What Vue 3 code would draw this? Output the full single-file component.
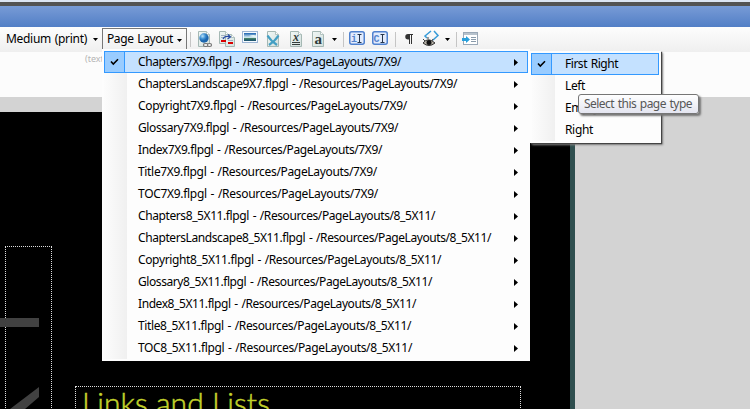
<script setup>
const files = [
  ['Chapters7X9', '7X9', 263], ['ChaptersLandscape9X7', '7X9', 319], ['Copyright7X9', '7X9', 269],
  ['Glossary7X9', '7X9', 260], ['Index7X9', '7X9', 244], ['Title7X9', '7X9', 239], ['TOC7X9', '7X9', 240],
  ['Chapters8_5X11', '8_5X11', 297], ['ChaptersLandscape8_5X11', '8_5X11', 353], ['Copyright8_5X11', '8_5X11', 303],
  ['Glossary8_5X11', '8_5X11', 294], ['Index8_5X11', '8_5X11', 278], ['Title8_5X11', '8_5X11', 273], ['TOC8_5X11', '8_5X11', 274]
].map(([name, folder, width]) => ({ text: `${name}.flpgl - /Resources/PageLayouts/${folder}/`, width }))

const pages = [['First Right', 53], ['Left', 20], ['Empty', 34], ['Right', 28]]

// Spreads the letters of a label over a given width.
const vFit = {
  mounted(el, { value }) {
    const natural = el.getBoundingClientRect().width
    el.style.letterSpacing = `${(value - natural) / el.textContent.length}px`
  }
}
</script>

<template>
  <div class="app">
    <div class="edge"></div>
    <div class="frame"></div>
    <div class="caption"></div>
    <div class="toolbar">
      <div class="medium"><span v-fit="81">Medium (print)</span></div>
      <i class="drop"></i>
      <div class="layout-button"><span v-fit="66">Page Layout</span><i class="drop"></i></div>
      <svg class="icons" width="300" height="25" viewBox="187 27 300 25">
        <defs>
          <linearGradient id="doc" x2="1" y2="1"><stop stop-color="#f1f7f5" /><stop offset="1" stop-color="#d3e0dd" /></linearGradient>
          <radialGradient id="globe" cx=".35" cy=".3"><stop stop-color="#b9e2f8" /><stop offset=".6" stop-color="#3c8fd2" /><stop offset="1" stop-color="#1c66ae" /></radialGradient>
          <linearGradient id="sky" x2="0" y2="1"><stop stop-color="#1b62b0" /><stop offset=".55" stop-color="#d8eef5" /><stop offset=".7" stop-color="#36765f" /><stop offset="1" stop-color="#1b5074" /></linearGradient>
        </defs>
        <path fill="#c5c5c5" d="M190 32h1v15h-1zM343 32h1v15h-1zM395 32h1v15h-1zM456 32h1v15h-1z" />
        <g fill="url(#doc)" stroke="#a5b8b4">
          <path d="M198.500 31.500h8l3 3v12h-11z" />
          <path d="M219.500 31.500h6l3 3v9h-9z" />
          <path d="M225.500 34.500h6l3 3v9h-9z" />
          <path d="M267.500 31.500h8l3 3v12h-11z" />
          <path d="M290.500 31.500h8l3 3v12h-11z" />
          <path d="M312.500 31.500h8l3 3v12h-11z" />
        </g>
        <g fill="#fff" stroke="#a5b8b4" stroke-width=".8"><path d="M206.500 31.500v3h3M225.500 31.500v3h3M231.500 34.500v3h3M275.500 31.500v3h3M298.500 31.500v3h3M320.500 31.500v3h3" /></g>
        <circle cx="204" cy="38" r="4.700" fill="url(#globe)" />
        <g fill="#eee" stroke="#777" stroke-width="1.200"><rect x="203.500" y="43.500" width="4.500" height="3" rx="1.500" /><rect x="207.500" y="43.500" width="4" height="3" rx="1.500" /></g>
        <path d="M221 35.500h4M221 37.500h3M228 40.500h5" stroke="#9fb0c0" />
        <path d="M221 40h5v2h-5zM228 42h5v2h-5z" fill="#d90000" />
        <path d="M223 39q2-4 7-2m-2-2.500 2.500 2.500-3 2" stroke="#264aa3" stroke-width="1.200" fill="none" />
        <rect x="242.500" y="31.500" width="15" height="11" fill="#f6faff" stroke="#9db5d4" />
        <rect x="244" y="33" width="12" height="8" fill="url(#sky)" />
        <path d="M249 36q4-1.500 7-.5v2q-4-1-7-1.500z" fill="#e6f5f5" />
        <path d="M267.500 35.500q3 5 9.500 9.500M278.500 35.500q-3 5-9.500 9.500" fill="none" stroke="#439fc4" stroke-width="2.200" />
        <path d="M292 42.500h8M292 44.500h8" stroke="#343d3b" />
        <text x="293" y="40.500" class="glyph italic">x</text>
        <text x="314.500" y="44" class="glyph letter">a</text>
        <path d="M332 38h5l-2.500 3zM445 38h5l-2.500 3z" fill="#000" />
        <g fill="#e2ebfc" stroke="#4f81cf" stroke-width="1.500"><rect x="349.750" y="31.750" width="14.500" height="12.500" rx="2" /><rect x="372.750" y="31.750" width="14.500" height="12.500" rx="2" /></g>
        <text x="351" y="42" class="code">i</text><text x="373.500" y="42" class="code">C</text>
        <path d="M357.500 34.500h4M359.500 35v7M357.500 42.500h4M380.500 34.500h4M382.500 35v7M380.500 42.500h4" stroke="#26364d" fill="none" />
        <path d="M413 34h-5a2.750 2.750 0 0 0 0 5.500h1v4.500h1v-9h1v9h1v-9h1z" fill="#333" />
        <path d="m431 31-6 5 2 2M434 31l4 4.500-5 4.500" fill="none" stroke="#379bd8" stroke-width="1.500" />
        <path d="M423 43q5-6.500 12 0-6 5-12 0" fill="#b5b0a6" stroke="#333" /><circle cx="429" cy="42.500" r="2.500" fill="#111" />
        <path d="M423 39l2 2M428 37v2M433 39l-1 2" stroke="#444" />
        <rect x="463.500" y="32.500" width="14" height="12" fill="#fff" stroke="#9aa8b7" /><path d="M464 33h13v2h-13z" fill="#b7c2cc" />
        <path d="M471 37.500h5M471 39.500h5M471 41.500h5" stroke="#899aaa" />
        <path d="M462 38h4v-2l4 3.500-4 3.500v-2h-4z" fill="#29a0dc" />
      </svg>
    </div>
    <div class="strip"></div>
    <div class="canvas"><div class="page"></div></div>

    <span class="hint">(text)</span>
    <div class="side-frame"></div>
    <svg class="side-letters" width="40" height="100" viewBox="0 0 40 100"><path d="M0 9h39v9H0zM39 78v10L25 100H10z" fill="#414141" /></svg>
    <div class="heading-frame"><span v-fit="188">Links and Lists</span></div>

    <div class="menu">
      <div class="gutter"></div>
      <div v-for="(file, i) in files" :key="file.text" class="item" :class="{ active: i === 0 }">
        <span class="check"><svg v-if="i === 0" width="9" height="8" viewBox="0 0 9 8"><path d="m1 3.500 2.300 2.500L8 1.300" /></svg></span>
        <span class="label"><span v-fit="file.width">{{ file.text }}</span></span>
        <svg class="arrow" width="4" height="7" viewBox="0 0 4 7"><path d="M0 0v7l4-3.500z" /></svg>
      </div>
    </div>

    <div class="menu submenu">
      <div class="gutter"></div>
      <div v-for="([name, width], i) in pages" :key="name" class="item" :class="{ active: i === 0 }">
        <span class="check"><svg v-if="i === 0" width="9" height="8" viewBox="0 0 9 8"><path d="m1 3.500 2.300 2.500L8 1.300" /></svg></span>
        <span class="label"><span v-fit="width">{{ name }}</span></span>
      </div>
    </div>
    <div class="tooltip"><span v-fit="108">Select this page type</span></div>
  </div>
</template>

<style>
body { margin: 0; overflow: hidden; }
</style>

<style scoped>
* { box-sizing: border-box; }
.app { position: relative; width: 750px; height: 409px; overflow: hidden; display: flex; flex-direction: column; font: 12px/16px "Noto Sans", sans-serif; word-spacing: 1px; color: #000; white-space: nowrap; }
.edge { height: 2px; background: #dce5f3; flex: none; }
.frame { height: 4px; background: #535353; flex: none; }
.caption { height: 21px; background: linear-gradient(#789bd6, #527fc6); flex: none; }
.toolbar { height: 25px; flex: none; display: flex; align-items: flex-start; background: linear-gradient(#fdfdfd, #efefef); }
.medium { width: 93px; padding: 4px 0 0 6px; flex: none; }
.drop { width: 5px; height: 3px; background: #000; clip-path: polygon(0 0, 100% 0, 50% 100%); margin-top: 11px; flex: none; }
.layout-button { width: 85px; height: 23px; margin: 1px 0 0 4px; padding: 2px 0 0 4px; border: 1px solid #777; border-bottom: 0; display: flex; gap: 4px; flex: none; }
.layout-button .drop { margin-top: 8px; }
.icons { flex: none; }
.glyph { font: bold 12px "Liberation Serif", serif; fill: #303b39; }
.italic { font-style: italic; }
.letter { font-size: 15px; }
.code { font: bold 10px "Liberation Mono", monospace; fill: #5686cf; }
.strip { height: 45px; background: #fcfcfc; flex: none; }
.canvas { flex: 1; background: #d3d3d3; padding-top: 15px; display: flex; }
.page { width: 575px; background: #000; border-right: 5px solid #2f4f4f; }
.hint { position: absolute; left: 85px; top: 51px; font-size: 9px; color: #b5b5b5; }
.side-frame { position: absolute; left: 5px; top: 246px; width: 47px; height: 180px; border: 1px dotted #ddd; }
.side-letters { position: absolute; left: 0; top: 309px; }
.heading-frame { position: absolute; left: 75px; top: 386px; width: 446px; height: 50px; border: 1px dotted #ddd; padding-left: 6px; font: 300 30px/31px Lato, sans-serif; word-spacing: 0; color: #c2d22c; -webkit-text-stroke: .5px #c2d22c; }
.menu { position: absolute; left: 102px; top: 49px; width: 428px; height: 312px; padding: 2px; background: #fdfdfd; }
.gutter { position: absolute; left: 2px; top: 2px; bottom: 2px; width: 23px; background: linear-gradient(90deg, #fcfcfc, #f0f0f0); }
.item { position: relative; height: 22px; display: flex; align-items: center; }
.active { background: #c4e1ff; border: 1px solid #3399ff; }
.check { width: 20px; height: 20px; display: flex; align-items: center; justify-content: center; flex: none; }
.item:not(.active) .check { width: 21px; }
.active .check { background: #99ccff; border-right: 1px solid #3399ff; }
.check path { fill: none; stroke: #000; stroke-width: 1.6; }
.label { margin-left: 13px; flex: 1; }
.arrow { margin-right: 10px; }
.active .arrow { margin-right: 9px; }
.submenu { left: 530px; top: 51px; width: 131px; height: 92px; padding: 2px 2px 2px 1px; box-shadow: 1px 1px 1px #444, 2px 2px 2px #888; }
.tooltip { position: absolute; left: 578px; top: 94px; width: 121px; height: 20px; border: 1px solid #767676; border-radius: 3px; background: linear-gradient(#fff, #e4e5f0); box-shadow: 2px 2px 2px #777; color: #575757; padding: 1px 0 0 5px; }
</style>
